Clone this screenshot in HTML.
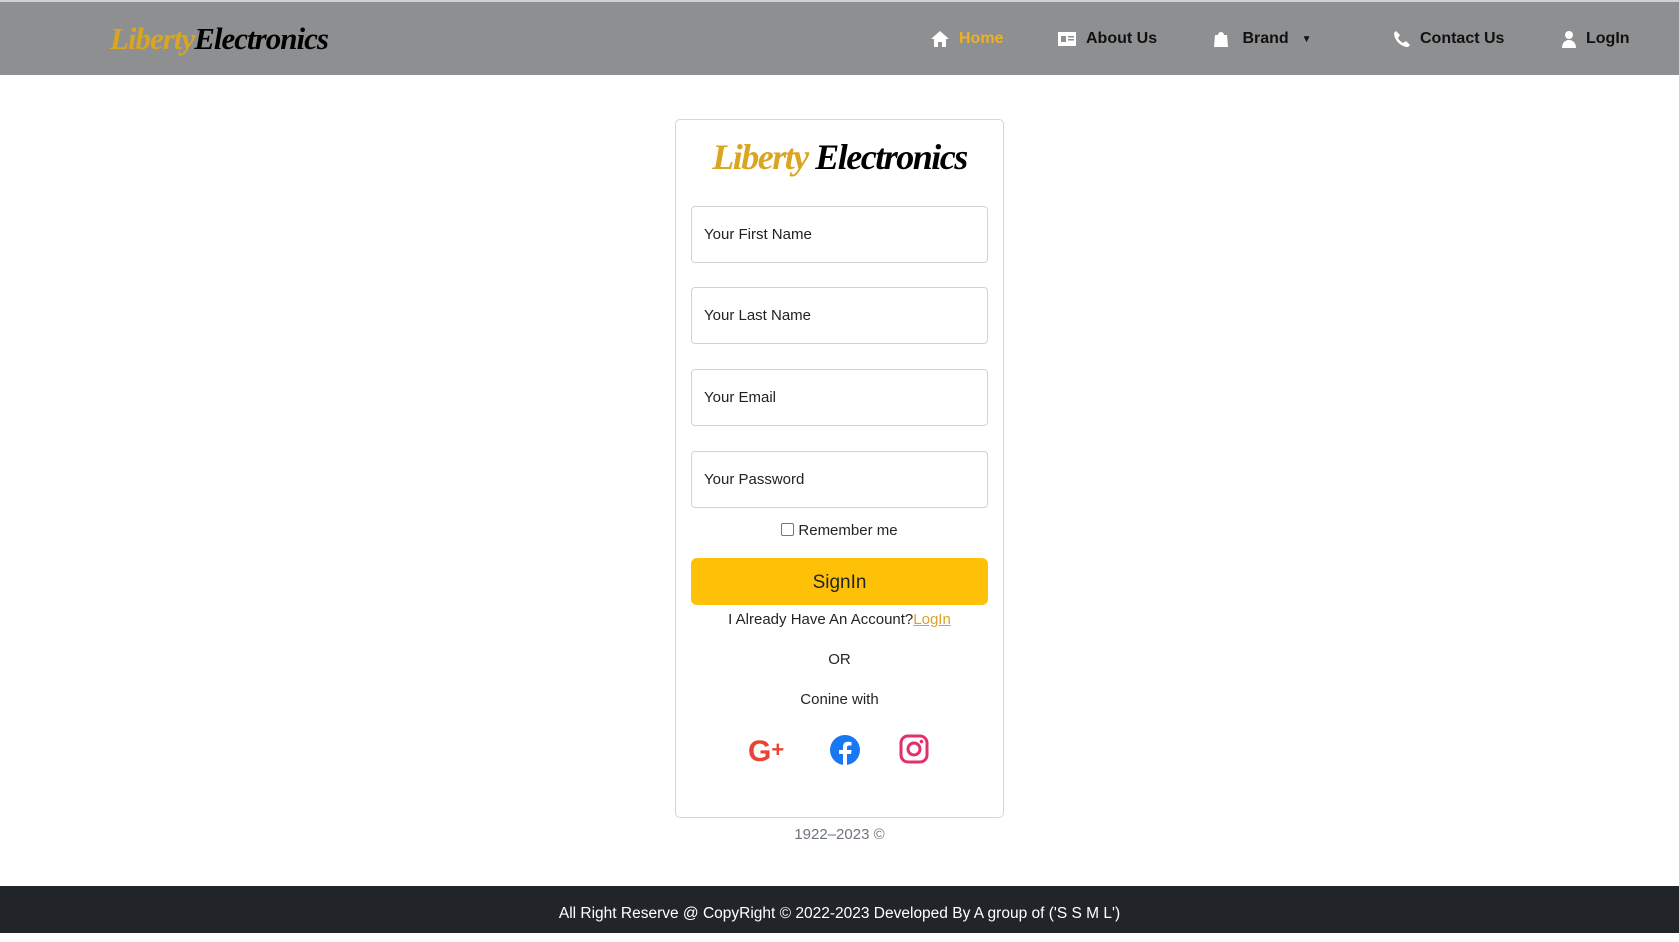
<!DOCTYPE html>
<html><head><meta charset="utf-8"><style>
*{box-sizing:border-box;margin:0;padding:0}
body{width:1679px;height:935px;background:#fff;font-family:"Liberation Sans",sans-serif;position:relative;overflow:hidden;color:#212529}
.top{position:absolute;left:0;top:0;width:1679px;height:2px;background:#d0d0d0}
nav{position:absolute;left:0;top:2px;width:1679px;height:73px;background:#8e8f91}
.logo{position:absolute;font-family:"Liberation Serif",serif;font-style:italic;font-weight:bold;letter-spacing:-1.5px}
.logo .a{color:#daa520}.logo .b{color:#000}
.ni{position:absolute;top:28px;font-weight:bold;font-size:16px;color:#111;display:flex;align-items:center;gap:9px}
.ni svg{fill:#fff}
.card{position:absolute;left:675px;top:119px;width:329px;height:699px;border:1px solid #d6d6d6;border-radius:5px}
.in{position:absolute;left:691px;width:297px;height:57px;border:1px solid #cfd4da;border-radius:4px;font-size:15px;color:#222;padding:0 12px;line-height:56px}
.c{position:absolute;left:675px;width:329px;text-align:center;font-size:15px}
.btn{position:absolute;left:691px;top:558px;width:297px;height:47px;background:#ffc107;border-radius:6px;font-size:19px;text-align:center;line-height:49px}
footer{position:absolute;left:0;top:886px;width:1679px;height:47px;background:#212529;color:#fff;text-align:center;font-size:15.5px;line-height:56px}
</style></head><body>
<div class="top"></div>
<nav>
<div class="logo" style="left:110px;top:19px;font-size:31px;letter-spacing:-1px"><span class="a">Liberty</span><span class="b">Electronics</span></div>
<div class="ni" style="left:930px;color:#f0b020"><svg width="20" height="18" viewBox="0 0 20 18"><path d="M10 1L1 9h3v8h4v-5h4v5h4V9h3z"/></svg>Home</div>
<div class="ni" style="left:1057px"><svg width="20" height="16" viewBox="0 0 20 16"><path d="M1 1h18v14H1z M4 5h5v6H4z M11 5h6v1.5h-6z M11 8h6v1.5h-6z" fill-rule="evenodd"/></svg>About Us</div>
<div class="ni" style="left:1213px"><svg width="16" height="18" viewBox="0 0 16 18"><path d="M2 5h12l1 12H1z M5 5a3 3 0 0 1 6 0"/></svg>&nbsp;Brand <span style="font-size:10px;margin-left:4px">▼</span></div>
<div class="ni" style="left:1393px"><svg width="18" height="18" viewBox="0 0 18 18"><path d="M3 1l4 4-2 3c1 2 3 4 5 5l3-2 4 4-2 2C8 17 1 10 1 3z"/></svg>Contact Us</div>
<div class="ni" style="left:1561px"><svg width="16" height="18" viewBox="0 0 16 18"><circle cx="8" cy="5" r="4"/><path d="M1 18c0-5 3-8 7-8s7 3 7 8z"/></svg>LogIn</div>
</nav>
<div class="card"></div>
<div class="logo" style="left:675px;width:329px;text-align:center;top:136px;font-size:36px"><span class="a">Liberty</span> <span class="b">Electronics</span></div>
<div class="in" style="top:206px">Your First Name</div>
<div class="in" style="top:287px">Your Last Name</div>
<div class="in" style="top:369px">Your Email</div>
<div class="in" style="top:451px">Your Password</div>
<div class="c" style="top:522px"><span style="display:inline-block;width:13px;height:13px;border:1px solid #767676;border-radius:2px;vertical-align:-1px;margin-right:4px"></span>Remember me</div>
<div class="btn">SignIn</div>
<div class="c" style="top:611px">I Already Have An Account?<span style="color:#e0a030;text-decoration:underline">LogIn</span></div>
<div class="c" style="top:651px">OR</div>
<div class="c" style="top:691px">Conine with</div>
<div style="position:absolute;left:748px;top:735px;font-weight:bold;font-size:30px;color:#ea4335;line-height:30px">G<span style="font-size:22px;vertical-align:4px">+</span></div>
<svg style="position:absolute;left:829px;top:734px" width="32" height="32" viewBox="0 0 32 32"><circle cx="16" cy="16" r="15" fill="#1877f2"/><path d="M18 31V20h4l.6-4H18v-2.5c0-1.2.5-2 2-2h2.5V8c-.7-.1-2-.3-3.5-.3-3.5 0-5 2-5 5.3V16h-4v4h4v11z" fill="#fff"/></svg>
<svg style="position:absolute;left:899px;top:734px" width="30" height="30" viewBox="0 0 30 30"><rect x="2" y="2" width="26" height="26" rx="7" fill="none" stroke="#e1306c" stroke-width="3"/><circle cx="15" cy="15" r="6" fill="none" stroke="#e1306c" stroke-width="3"/><circle cx="22.5" cy="7.5" r="1.8" fill="#e1306c"/></svg>
<div class="c" style="top:826px;color:#6c757d">1922–2023 ©</div>
<footer>All Right Reserve @ CopyRight © 2022-2023 Developed By A group of ('S S M L')</footer>
</body></html>
